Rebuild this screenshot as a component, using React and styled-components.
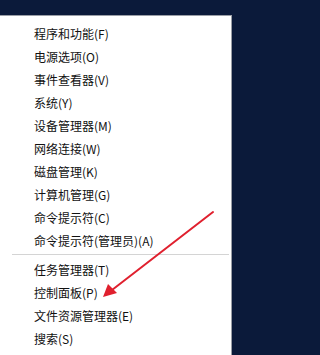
import React from "react";
import styled, { createGlobalStyle } from "styled-components";

const GlobalStyle = createGlobalStyle`
  html, body {
    margin: 0;
    padding: 0;
    background: #0b1a3a;
    overflow: hidden;
  }
  #root {
    height: 355px;
  }
`;

const Screen = styled.div`
  position: relative;
  width: 234px;
  height: 355px;
  padding-top: 15px;
  box-sizing: border-box;
  background: #0b1a3a;
`;

const Menu = styled.ul`
  list-style: none;
  margin: 0;
  width: 232px;
  height: 340px;
  box-sizing: border-box;
  padding: 6px 0 0 0;
  background: #ffffff;
  border-top: 1px solid #9a9ea6;
  border-right: 1px solid #9a9ea6;
  font-family: "Noto Sans CJK SC", "Noto Sans", sans-serif;
  font-size: 12px;
  color: #111111;
`;

const Item = styled.li`
  height: 23px;
  line-height: 23px;
  padding-left: 34px;
  white-space: nowrap;
`;

const Separator = styled.li`
  height: 1px;
  margin: 2px 2px 3px 12px;
  background: #d4d4d4;
`;

const Arrow = styled.svg`
  position: absolute;
  left: 0;
  top: 0;
  pointer-events: none;
`;

const groups = [
  [
    "程序和功能(F)",
    "电源选项(O)",
    "事件查看器(V)",
    "系统(Y)",
    "设备管理器(M)",
    "网络连接(W)",
    "磁盘管理(K)",
    "计算机管理(G)",
    "命令提示符(C)",
    "命令提示符(管理员)(A)",
  ],
  ["任务管理器(T)", "控制面板(P)", "文件资源管理器(E)", "搜索(S)"],
];

const App = () => {
  return (
    <>
      <GlobalStyle />
      <Screen>
        <Menu>
          {groups.map((group, i) => (
            <React.Fragment key={i}>
              {i > 0 && <Separator />}
              {group.map((label) => (
                <Item key={label}>{label}</Item>
              ))}
            </React.Fragment>
          ))}
        </Menu>
        <Arrow width="234" height="355" viewBox="0 0 234 355">
          <line x1="213" y1="212" x2="112" y2="290" stroke="#e0202e" strokeWidth="2" strokeLinecap="round" />
          <polygon points="103,297 108,284 117,293" fill="#e0202e" />
        </Arrow>
      </Screen>
    </>
  );
};

export default App;
